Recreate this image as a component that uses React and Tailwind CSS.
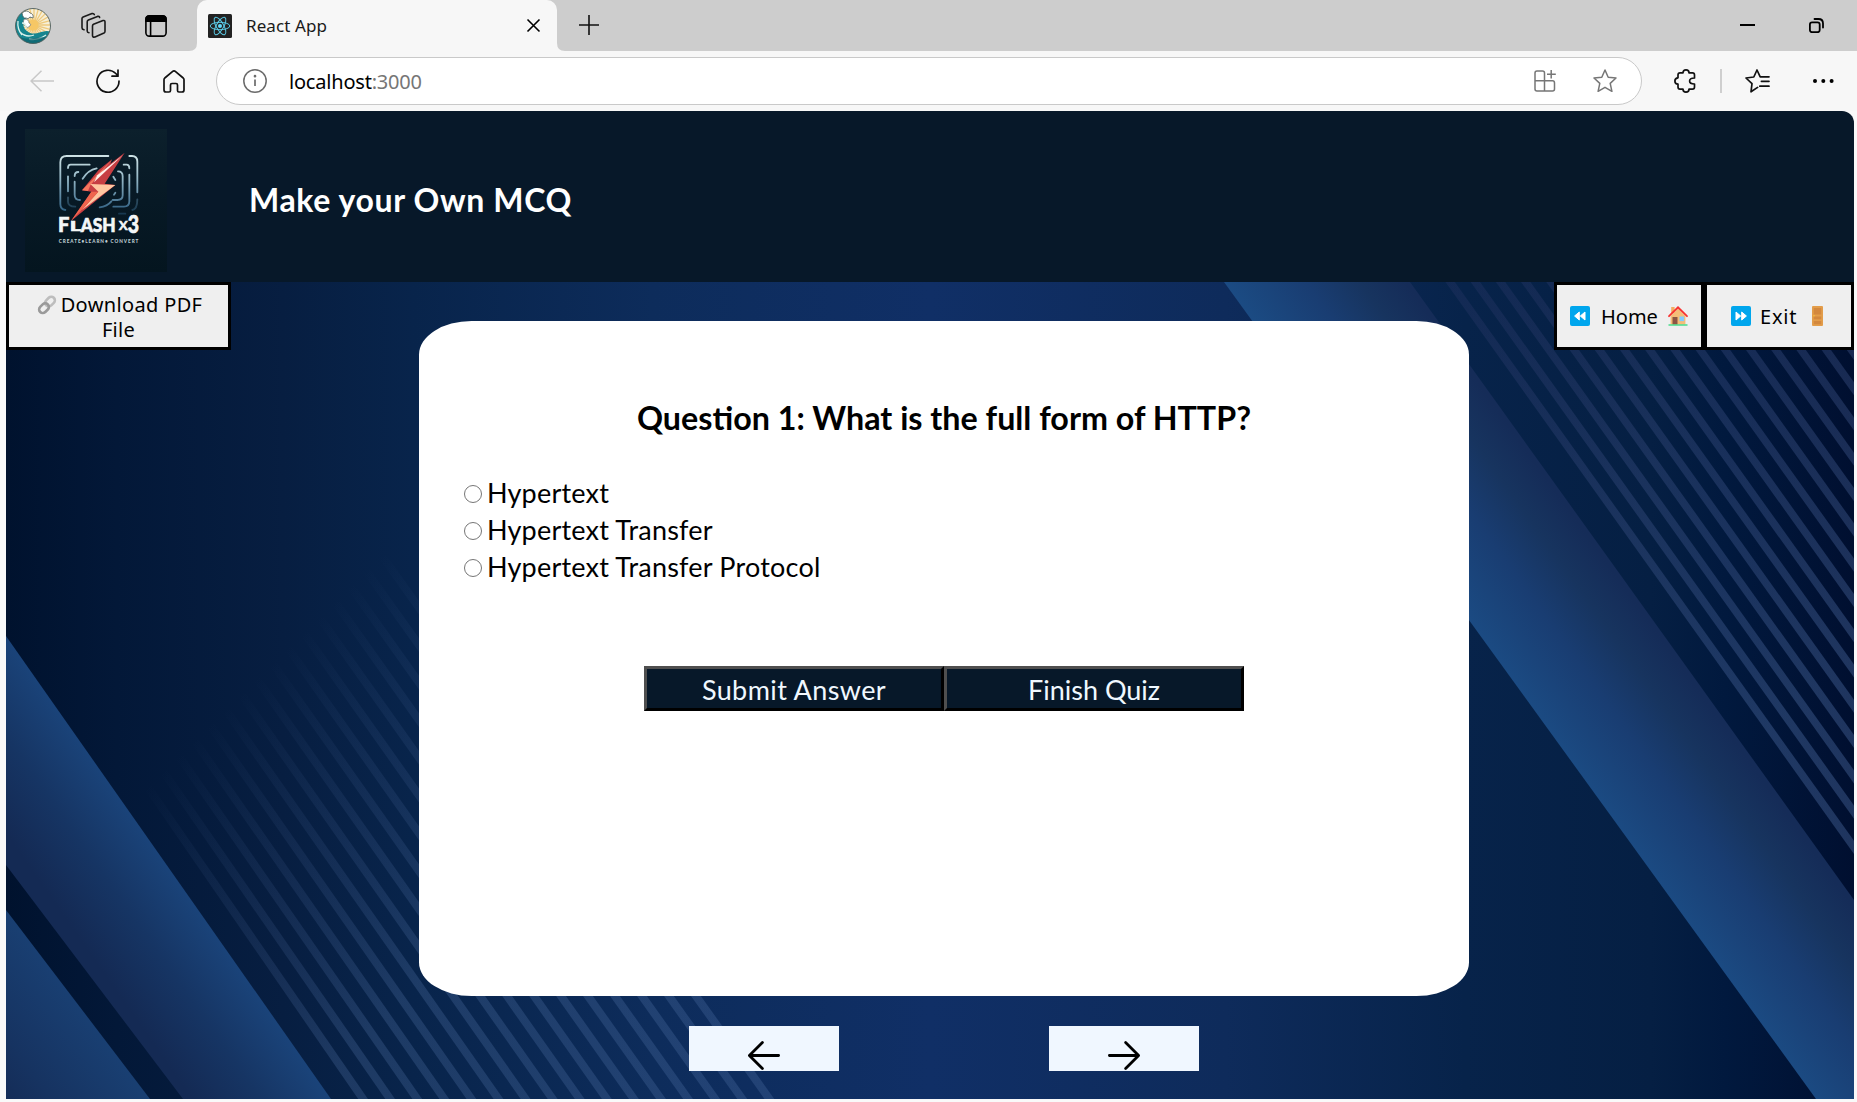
import React from "react";

const ICON = "shrink-0 overflow-visible";

function Avatar() {
  return (
    <svg className={ICON} width="36" height="36" viewBox="0 0 36 36">
      <defs>
        <clipPath id="avatar-clip">
          <circle cx="18" cy="18" r="17.5" />
        </clipPath>
      </defs>
      <g clipPath="url(#avatar-clip)">
        <rect width="36" height="36" fill="#f7efd6" />
        {Array.from({ length: 24 }, (_, i) => (
          <line key={i} x1="19" y1="17" x2={19 + 20 * Math.cos((i * Math.PI) / 12)} y2={17 + 20 * Math.sin((i * Math.PI) / 12)} stroke="#eec97c" strokeWidth="1.3" />
        ))}
        <circle cx="18" cy="17" r="5.5" fill="#f6c765" />
        <path d="M0 8 C8 2 14 5 16 10 C12 8 9 11 11 15 C7 14 8 20 12 23 C20 30 28 20 36 24 V36 H0Z" fill="#16858f" />
        <path d="M7 5 q5 -4 8 0 q4 1 3 5 l-3 -1 q-2 3 -4 1 q-3 1 -4 -5z" fill="#fff" stroke="#52605f" strokeWidth=".8" />
        <path d="M9 11 q5 0 5 4 q3 1 1 3 q-2 3 -5 0 q-3 -3 -1 -7z" fill="#fff" stroke="#52605f" strokeWidth=".6" />
        <path d="M7 15 q4 0 4 5 M5 24 q6 6 14 3 M14 31 q8 2 17 -4 M3 13 q-1 8 4 14" stroke="#d9f0ea" strokeWidth="1.3" fill="none" />
        <path d="M0 25 C8 35 20 28 36 29 V36 H0Z" fill="#0d5f6b" opacity=".7" />
      </g>
      <circle cx="18" cy="18" r="17.5" fill="none" stroke="#4c5c5c" strokeWidth=".9" />
    </svg>
  );
}

function Workspaces() {
  return (
    <svg className={ICON} width="25" height="25" viewBox="0 0 25 25" fill="none" stroke="#1b1b1b" strokeWidth="1.6" strokeLinejoin="round" strokeLinecap="round">
      <path d="M12.5 11.2 L22 7.6 Q24 7 24 9 V18.2 Q24 19.4 23 20 L14 24 Q11.5 24.6 11.5 22.6 V13 Q11.5 11.7 12.5 11.2Z" />
      <path d="M8 19.7 Q6.2 19.6 6.2 18 V8.8 Q6.2 7.6 7.4 7 L16.5 3.4 Q18.3 3 18.6 4.5" />
      <path d="M3 16.8 Q1 16.5 1 14.8 V5.6 Q1 4.4 2.1 3.9 L11 .6 Q12.8 .2 13.3 1.6" />
    </svg>
  );
}

function VerticalTabs() {
  return (
    <svg className={ICON} width="22" height="22" viewBox="0 0 22 22" fill="none" stroke="#000" strokeWidth="1.6">
      <rect x=".9" y=".9" width="20.2" height="20.2" rx="3.4" />
      <path d="M1 6.3 V4 Q1 1 4 1 H18 Q21 1 21 4 V6.3Z" fill="#000" />
      <path d="M5.6 6 V21" />
    </svg>
  );
}

function ReactMark() {
  return (
    <svg className={ICON} width="24" height="24" viewBox="0 0 24 24">
      <rect width="24" height="24" rx="1.5" fill="#222" />
      <g fill="none" stroke="#5ac8e3" strokeWidth="1">
        <ellipse cx="12" cy="12" rx="9.8" ry="3.7" />
        <ellipse cx="12" cy="12" rx="9.8" ry="3.7" transform="rotate(60 12 12)" />
        <ellipse cx="12" cy="12" rx="9.8" ry="3.7" transform="rotate(120 12 12)" />
      </g>
      <circle cx="12" cy="12" r="2" fill="#61dafb" />
    </svg>
  );
}

function TabStrip() {
  return (
    <div className="flex h-[51px] bg-[#cdcdcd]">
      <div className="flex w-[197px] items-start pl-[15px]">
        <div className="pt-[8px]"><Avatar /></div>
        <div className="ml-[30px] pt-[13px]"><Workspaces /></div>
        <div className="ml-[39px] pt-[15px]"><VerticalTabs /></div>
      </div>
      <div className="relative flex w-[360px] items-center rounded-t-[10px] bg-[#f7f7f7] pl-[11px]">
        <svg className="absolute -left-[8px] bottom-0" width="8" height="8" viewBox="0 0 8 8"><path d="M8 0 V8 H0 Q8 8 8 0Z" fill="#f7f7f7" /></svg>
        <svg className="absolute -right-[8px] bottom-0" width="8" height="8" viewBox="0 0 8 8"><path d="M0 0 V8 H8 Q0 8 0 0Z" fill="#f7f7f7" /></svg>
        <ReactMark />
        <span className="ml-[14px] w-[281px] whitespace-nowrap text-[17px] tracking-[0.1px] text-[#1a1a1a]">React App</span>
        <svg className={ICON} width="13" height="13" viewBox="0 0 13 13" stroke="#000" strokeWidth="1.6"><path d="M.5 .5 L12.5 12.5 M12.5 .5 L.5 12.5" /></svg>
      </div>
      <div className="flex flex-1 items-start pl-[22px] pt-[15px]">
        <svg className={ICON} width="20" height="20" viewBox="0 0 20 20" stroke="#111" strokeWidth="1.6"><path d="M10 0 V20 M0 10 H20" /></svg>
      </div>
      <div className="flex w-[117px] items-start">
        <div className="mt-[24px] h-[2px] w-[15px] bg-black" />
        <svg className="ml-[54px] mt-[18px] shrink-0" width="15" height="15" viewBox="0 0 15 15" fill="none" stroke="#000" strokeWidth="1.8">
          <rect x=".9" y="4.4" width="9.8" height="9.8" rx="2.2" />
          <path d="M5.5 1 H9.5 Q14 1 14 5.5 V9.5" strokeLinecap="round" />
        </svg>
      </div>
    </div>
  );
}

function Toolbar() {
  return (
    <div className="flex h-[60px] items-center bg-[#f7f7f7] pl-[30px]">
      <svg className={ICON} width="24" height="22" viewBox="0 0 24 22" fill="none" stroke="#c8c8c8" strokeWidth="1.5" strokeLinejoin="round"><path d="M24 11 H1 M11.5 .7 L1 11 L11.5 21.3" /></svg>
      <svg className="ml-[42px] shrink-0" width="24" height="24" viewBox="0 0 24 24" fill="none" stroke="#111" strokeWidth="1.7" strokeLinecap="round" strokeLinejoin="round"><path d="M23 12 A11 11 0 1 1 19.8 4.5 L22 7 M22 1 V7.2 H16" /></svg>
      <svg className="ml-[43px] shrink-0" width="22" height="23" viewBox="0 0 22 23" fill="none" stroke="#111" strokeWidth="1.7" strokeLinejoin="round"><path d="M1 9.8 Q1 8.8 1.8 8 L10 1.2 Q11 .5 12 1.2 L20.2 8 Q21 8.8 21 9.8 V20 Q21 22 19 22 H16 Q14.5 22 14.5 20.5 V15 Q14.5 13.5 13 13.5 H9 Q7.5 13.5 7.5 15 V20.5 Q7.5 22 6 22 H3 Q1 22 1 20Z" /></svg>
      <div className="ml-[31px] flex h-[48px] w-[1426px] items-center rounded-full border border-[#c9c9c9] bg-white pl-[26px] pr-[24px]">
        <svg className={ICON} width="24" height="24" viewBox="0 0 24 24" fill="none" stroke="#6b6b6b" strokeWidth="1.5"><circle cx="12" cy="12" r="11.2" /><path d="M12 10.5 V17" strokeWidth="1.7" /><circle cx="12" cy="7.2" r=".6" fill="#6b6b6b" /></svg>
        <span className="ml-[22px] flex-1 whitespace-nowrap pt-[2px] text-[20px] tracking-[-0.2px] text-black">localhost<span className="text-[#767676]">:3000</span></span>
        <svg className={ICON} width="22" height="22" viewBox="0 0 22 22" fill="none" stroke="#767676" strokeWidth="1.5"><path d="M10.5 10.8 V3 Q10.5 1 8.5 1 H3 Q1 1 1 3 V19 Q1 21 3 21 H18.5 Q20.5 21 20.5 19 V13 Q20.5 10.8 18.5 10.8Z M1 10.8 H10.5 V21 M17.2 0 V8.6 M13 4.3 H21.8" /></svg>
        <svg className="ml-[37px] shrink-0" width="24" height="24" viewBox="0 0 24 24" fill="none" stroke="#767676" strokeWidth="1.5" strokeLinejoin="round"><path d="M12 1 L15.2 8.2 L23 9 L17.2 14.4 L18.9 22.3 L12 18.3 L5.1 22.3 L6.8 14.4 L1 9 L8.8 8.2Z" /></svg>
      </div>
      <svg className="ml-[32px] shrink-0" width="22" height="24" viewBox="0 0 22 24" fill="none" stroke="#111" strokeWidth="1.7" strokeLinejoin="round"><path d="M4 6 Q4 3.8 6 3.8 H9 Q9 .9 12 .9 Q15 .9 15 3.8 H18.5 Q20.5 3.8 20.5 6 V9 Q15.6 9 15.6 12 Q15.6 15 20.5 15 V18 Q20.5 20.2 18.5 20.2 H15 Q15 23.1 12 23.1 Q9 23.1 9 20.2 H6 Q4 20.2 4 18 V15.2 Q.9 15 .9 12 Q.9 9 4 8.8Z" /></svg>
      <div className="ml-[24px] h-[24px] w-[2px] bg-[#cfcfcf]" />
      <svg className="ml-[23px] shrink-0" width="25" height="24" viewBox="0 0 25 24" fill="none" stroke="#111" strokeWidth="1.7" strokeLinejoin="round" strokeLinecap="round"><path d="M12.6 18.4 L6 22.8 L7 14.6 L1 9 L8.8 8 L12 1 L15.2 7.8 H24 M16.4 12.3 H24 M14.8 17.2 H24" /></svg>
      <svg className="ml-[43px] shrink-0" width="21" height="4" viewBox="0 0 21 4"><circle cx="2" cy="2" r="2" /><circle cx="10.3" cy="2" r="2" /><circle cx="18.6" cy="2" r="2" /></svg>
    </div>
  );
}

function Logo() {
  return (
    <svg className="shrink-0" width="142" height="143" viewBox="-15 -3 426 429">
      <defs>
        <linearGradient id="logo-bg" x1="0" y1="0" x2="0" y2="1"><stop offset="0" stopColor="#0c202c" /><stop offset=".5" stopColor="#071925" /><stop offset="1" stopColor="#04151f" /></linearGradient>
        <linearGradient id="logo-line" gradientUnits="userSpaceOnUse" x1="0" y1="70" x2="0" y2="250"><stop offset="0" stopColor="#d3e6e8" /><stop offset=".45" stopColor="#8fb2c2" /><stop offset="1" stopColor="#28597d" /></linearGradient>
      </defs>
      <rect x="-15" y="-3" width="426" height="429" fill="url(#logo-bg)" />
      <g fill="none" stroke="url(#logo-line)" strokeWidth="5.5" strokeLinecap="round">
        <path d="M235 78 H110 Q91 78 91 97 V222 Q91 238 106 240" />
        <path d="M298 78 H306 Q322 78 322 95 V187" />
        <path d="M179 104 H122 Q114 104 114 114 M114 139 V184 M281 104 H290 Q298 104 298 115 M298 134 V214 Q298 230 282 230 H250" />
        <path d="M145 126 Q134 126 134 138 M134 155 V194 Q134 210 150 210 M264 124 Q278 124 278 139 V196 Q278 210 262 210 H248" />
        <path d="M158 146 Q174 120 200 115 M209 232 Q232 229 244 214 M252 194 L256 188 M250 140 L256 150" />
        <path d="M114 202 V215 Q114 229 136 230 M322 208 Q322 238 307 240 M267 251 H286" opacity=".5" />
      </g>
      <path d="M284 68 L224 161 L256 165 L123 273 L184 185 L156 181 L205 121 L246 88 L241 101Z" fill="#c73e43" />
      <path d="M246 89 L156 181 L174 183 L181 166Z" fill="#f4775e" />
      <path d="M278 76 L192 157 L202 136Z" fill="#fff1eb" />
      <path d="M181 162 L256 165 L156 240 L205 185Z" fill="#ffc6a0" />
      <path d="M184 185 L123 273 L150 245 L205 185Z" fill="#f0654e" />
      <g fill="#f4f7f8" stroke="#f4f7f8" strokeWidth="2" fontFamily='"Lato", sans-serif' fontWeight="900">
        <text x="84" y="307" fontSize="64" textLength="34" lengthAdjust="spacingAndGlyphs">F</text>
        <text x="120" y="304" fontSize="37" textLength="32" lengthAdjust="spacingAndGlyphs">L</text>
        <text x="152" y="306" fontSize="58" textLength="105" lengthAdjust="spacingAndGlyphs">ASH</text>
        <text x="266" y="299" fontSize="50" fontWeight="400" textLength="27" lengthAdjust="spacingAndGlyphs">x</text>
        <text x="293" y="309" fontSize="71" textLength="34" lengthAdjust="spacingAndGlyphs">3</text>
      </g>
      <text x="86" y="338" fontSize="14" fill="#bfcdd2" fontFamily='"Lato", sans-serif' fontWeight="900" textLength="239">CREATE•LEARN• CONVERT</text>
    </svg>
  );
}

function Backdrop() {
  return (
    <svg className="absolute inset-0" width="1848" height="817" viewBox="6 282 1848 817">
      <defs>
        <linearGradient id="base" gradientUnits="userSpaceOnUse" x1="6" y1="0" x2="1854" y2="0">
          <stop offset="0" stopColor="#00122e" /><stop offset=".06" stopColor="#031838" /><stop offset=".15" stopColor="#071e41" /><stop offset=".22" stopColor="#08244b" /><stop offset=".35" stopColor="#0d2c5b" /><stop offset=".5" stopColor="#102f66" /><stop offset=".66" stopColor="#0e2b5b" /><stop offset=".79" stopColor="#07234a" /><stop offset=".89" stopColor="#051f43" /><stop offset=".93" stopColor="#01193e" /><stop offset="1" stopColor="#000f30" />
        </linearGradient>
        <linearGradient id="beam-right" gradientUnits="userSpaceOnUse" x1="1224" y1="282" x2="1344" y2="196">
          <stop offset="0" stopColor="#1b4b83" /><stop offset=".45" stopColor="#193d72" /><stop offset=".75" stopColor="#17345f" /><stop offset="1" stopColor="#152c58" />
        </linearGradient>
        <linearGradient id="beam-left" gradientUnits="userSpaceOnUse" x1="6" y1="636" x2="-97" y2="708">
          <stop offset="0" stopColor="#1a4379" /><stop offset=".45" stopColor="#163564" /><stop offset=".9" stopColor="#142a54" /><stop offset="1" stopColor="#142a54" />
        </linearGradient>
        <linearGradient id="corner-left" gradientUnits="userSpaceOnUse" x1="6" y1="909" x2="-97" y2="987">
          <stop offset="0" stopColor="#193f72" /><stop offset=".6" stopColor="#163361" /><stop offset="1" stopColor="#142a54" />
        </linearGradient>
        <linearGradient id="rays-right" gradientUnits="userSpaceOnUse" x1="1440" y1="282" x2="1800" y2="700">
          <stop offset="0" stopColor="#3a3f74" stopOpacity=".22" /><stop offset=".5" stopColor="#3f5388" stopOpacity=".36" /><stop offset="1" stopColor="#4d6da4" stopOpacity=".4" />
        </linearGradient>
        <linearGradient id="rays-left" gradientUnits="userSpaceOnUse" x1="147" y1="786" x2="379" y2="1021">
          <stop offset="0" stopColor="#5f82b8" stopOpacity="0" /><stop offset=".5" stopColor="#5472a8" stopOpacity=".15" /><stop offset="1" stopColor="#5f82b8" stopOpacity=".25" />
        </linearGradient>
      </defs>
      <rect x="6" y="282" width="1848" height="817" fill="url(#base)" />
      <path d="M1224 282 H1410 L1854 900 V1099 H1816Z" fill="url(#beam-right)" />
      <path d="M6 636 L331 1099 H183 L6 865Z" fill="url(#beam-left)" />
      <path d="M6 910 L150 1099 H6Z" fill="url(#corner-left)" />
      <g stroke="url(#rays-right)" strokeWidth="7.6">
        {Array.from({ length: 17 }, (_, i) => (
          <line key={i} x1={1443 + 25.2 * i} y1="272" x2={1443 + 25.2 * i + 450} y2="902" />
        ))}
      </g>
      <g stroke="url(#rays-left)" strokeWidth="8">
        {Array.from({ length: 16 }, (_, i) => (
          <line key={i} x1={147 + 15.7 * i} y1={786 - 15.3 * i} x2={370 + 27.1 * i} y2="1109" />
        ))}
      </g>
    </svg>
  );
}

function LinkEmoji() {
  return (
    <svg className={ICON} width="20" height="20" viewBox="0 0 20 20" fill="none" strokeWidth="2.6">
      <rect x="-5.4" y="-3.6" width="10.8" height="7.2" rx="3.6" transform="translate(13 6.6) rotate(-45)" stroke="#bdbdbd" />
      <rect x="-5.4" y="-3.6" width="10.8" height="7.2" rx="3.6" transform="translate(7 13.2) rotate(-45)" stroke="#9a9a9a" />
    </svg>
  );
}

function SkipEmoji({ flip }) {
  return (
    <svg className={ICON} width="20" height="20" viewBox="0 0 20 20">
      <rect width="20" height="20" rx="2" fill="#00a6ed" />
      <g fill="#fff" stroke="#fff" strokeWidth="1" strokeLinejoin="round" transform={flip ? "matrix(-1 0 0 1 20 0)" : undefined}>
        <path d="M9.3 6 V14 L4.6 10Z M15 6 V14 L10.3 10Z" />
      </g>
    </svg>
  );
}

function HouseEmoji() {
  return (
    <svg className={ICON} width="20" height="20" viewBox="0 0 20 20">
      <rect x="3.2" y="1" width="3.4" height="6" fill="#f3ad61" />
      <path d="M2.6 10 L10 2.5 L17.4 10 V18.5 H2.6Z" fill="#f5bd78" />
      <rect x="4.5" y="11" width="5" height="7.5" fill="#8c5543" />
      <rect x="11.5" y="10.5" width="4.6" height="4.6" fill="#83cbff" />
      <path d="M1 10.2 L10 1.3 L19 10.2" fill="none" stroke="#f8312f" strokeWidth="1.8" strokeLinecap="round" />
      <path d="M.5 19 H19.5" stroke="#3ddc84" strokeWidth="1.4" />
    </svg>
  );
}

function DoorEmoji() {
  return (
    <svg className={ICON} width="11" height="20" viewBox="0 0 11 20">
      <rect width="11" height="20" rx="1" fill="#e39d4a" />
      <path d="M1.8 2 H9.2 V8.6 H1.8Z M1.8 10.6 H9.2 V13.2 H1.8Z M1.8 15 H9.2 V18.2 H1.8Z" fill="#d3883e" />
      <circle cx="2" cy="9.8" r=".8" fill="#f9c23c" />
    </svg>
  );
}

function Option({ label }) {
  return (
    <label className="flex h-[37px] items-center">
      <span className="h-[18px] w-[18px] shrink-0 rounded-full border-[1.5px] border-[#767676] bg-white" />
      <span className="ml-[5px] whitespace-nowrap pb-[2px] text-[27px] leading-[35px] tracking-[0.2px]">{label}</span>
    </label>
  );
}

function ArrowButton({ flip }) {
  return (
    <button className="flex h-[45px] w-[150px] items-start bg-[#f0f7ff] pl-[59px] pt-[15px]">
      <svg className={ICON} width="32" height="29" viewBox="0 0 32 29" fill="none" stroke="#000" strokeWidth="2.8" strokeLinecap="round" strokeLinejoin="round">
        <path d={flip ? "M1.4 14.5 H30.4 M17.6 1.4 L30.6 14.5 L17.6 27.6" : "M30.6 14.5 H1.6 M14.4 1.4 L1.4 14.5 L14.4 27.6"} />
      </svg>
    </button>
  );
}

export default function App() {
  return (
    <div className='h-[1102px] w-[1857px] overflow-hidden bg-[#f9f9f9] font-["Noto_Sans",sans-serif]'>
      <TabStrip />
      <Toolbar />
      <div className="ml-[6px] h-[988px] w-[1848px] overflow-hidden rounded-t-[12px] text-black">
        <header className="flex h-[171px] bg-[#071829] pl-[19px] pt-[18px]">
          <Logo />
          <h1 className='ml-[82px] mt-[49px] whitespace-nowrap font-["Lato",sans-serif] text-[32px] font-bold leading-[44px] tracking-[0.62px] text-white'>Make your Own MCQ</h1>
        </header>
        <main className="relative h-[817px]">
          <Backdrop />
          <div className="relative flex items-start">
            <button className="h-[68px] w-[225px] border-[3px] border-black bg-[#efefef] pt-[2px] text-[20px] leading-[25px]">
              <span className="flex items-center justify-center gap-[4px] pl-[2px]">
                <LinkEmoji />
                <span className="whitespace-nowrap tracking-[0.35px]">Download PDF</span>
              </span>
              <span className="block tracking-[0.3px]">File</span>
            </button>
            <section className="ml-[188px] mt-[39px] h-[675px] w-[1050px] rounded-[5%] bg-white pt-[75px] font-['Lato',sans-serif]">
              <h2 className="text-center text-[32.25px] font-bold leading-[44px]">Question 1: What is the full form of HTTP?</h2>
              <div className="ml-[45px] mt-[35px]">
                <Option label="Hypertext" />
                <Option label="Hypertext Transfer" />
                <Option label="Hypertext Transfer Protocol" />
              </div>
              <div className="ml-[225px] mt-[80px] flex text-[27px] leading-[37px] text-[#f0f8ff]">
                <button className="h-[45px] w-[300px] border-[3px] border-b-black border-l-[#4f4f4f] border-r-black border-t-[#4f4f4f] bg-[#071829] pt-[2px] tracking-[0.4px]">Submit Answer</button>
                <button className="h-[45px] w-[300px] border-[3px] border-b-black border-l-[#4f4f4f] border-r-black border-t-[#4f4f4f] bg-[#071829] pt-[2px]">Finish Quiz</button>
              </div>
            </section>
            <div className="ml-[85px] flex text-[20px]">
              <button className="flex h-[68px] w-[150px] items-center border-[3px] border-black bg-[#efefef] pl-[13px]">
                <SkipEmoji />
                <span className="ml-[11px] w-[67px] pt-[2px] text-left">Home</span>
                <HouseEmoji />
              </button>
              <button className="flex h-[68px] w-[150px] items-center border-[3px] border-black bg-[#efefef] pl-[24px]">
                <SkipEmoji flip />
                <span className="ml-[9px] w-[52px] pt-[2px] text-left tracking-[0.8px]">Exit</span>
                <DoorEmoji />
              </button>
            </div>
          </div>
          <div className="relative ml-[683px] mt-[30px] flex gap-[210px]">
            <ArrowButton />
            <ArrowButton flip />
          </div>
        </main>
      </div>
    </div>
  );
}
